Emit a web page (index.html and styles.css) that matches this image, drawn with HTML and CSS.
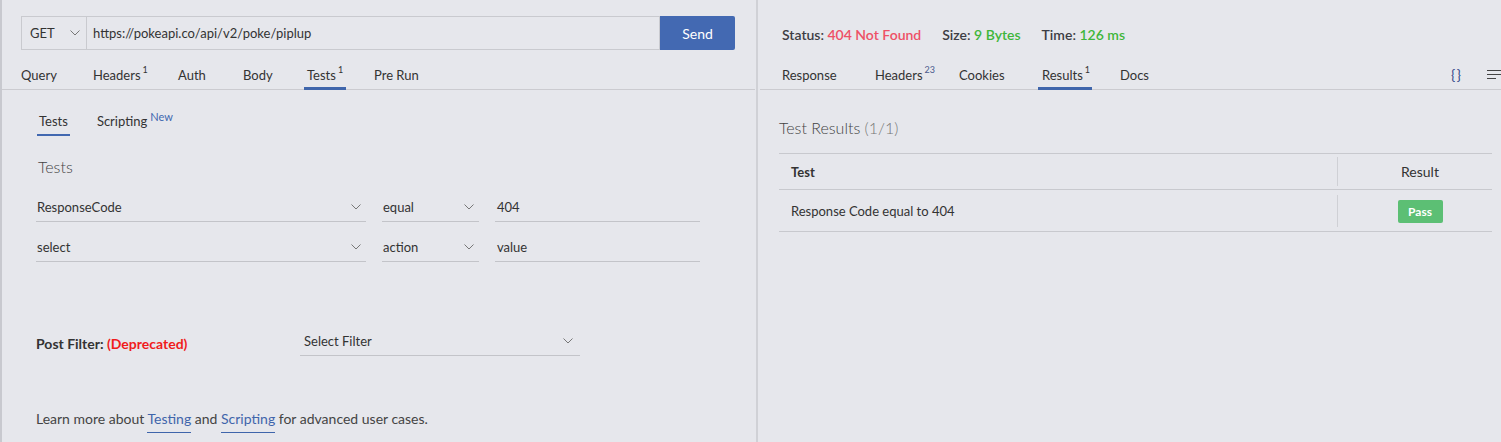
FILE: index.html
```html
<!DOCTYPE html>
<html>
<head>
<meta charset="utf-8">
<link rel="stylesheet" href="styles.css">
</head>
<body>
<div class="app">
  <section class="left">
    <div class="urlbar">
      <div class="method">GET <svg class="chev" width="10" height="6" viewBox="0 0 10 6"><path d="M0.5 0.5l4.5 4.5 4.5-4.5" fill="none" stroke="#777" stroke-width="1"/></svg></div>
      <div class="url">https://pokeapi.co/api/v2/poke/piplup</div>
      <button class="send">Send</button>
    </div>
    <nav class="tabs ltabs">
      <span class="tab"><span class="lbl">Query</span></span>
      <span class="tab"><span class="lbl">Headers<sup>1</sup></span></span>
      <span class="tab"><span class="lbl">Auth</span></span>
      <span class="tab"><span class="lbl">Body</span></span>
      <span class="tab"><span class="lbl active">Tests<sup>1</sup></span></span>
      <span class="tab"><span class="lbl">Pre Run</span></span>
    </nav>
    <div class="body">
      <div class="subtabs">
        <span class="subtab active">Tests</span>
        <span class="subtab">Scripting<sup class="new">New</sup></span>
      </div>
      <h3 class="heading">Tests</h3>
      <div class="row">
        <div class="field f1">ResponseCode<svg class="chev" width="10" height="6" viewBox="0 0 10 6"><path d="M0.5 0.5l4.5 4.5 4.5-4.5" fill="none" stroke="#777" stroke-width="1"/></svg></div>
        <div class="field f2">equal<svg class="chev" width="10" height="6" viewBox="0 0 10 6"><path d="M0.5 0.5l4.5 4.5 4.5-4.5" fill="none" stroke="#777" stroke-width="1"/></svg></div>
        <div class="field f3">404</div>
      </div>
      <div class="row">
        <div class="field f1">select<svg class="chev" width="10" height="6" viewBox="0 0 10 6"><path d="M0.5 0.5l4.5 4.5 4.5-4.5" fill="none" stroke="#777" stroke-width="1"/></svg></div>
        <div class="field f2">action<svg class="chev" width="10" height="6" viewBox="0 0 10 6"><path d="M0.5 0.5l4.5 4.5 4.5-4.5" fill="none" stroke="#777" stroke-width="1"/></svg></div>
        <div class="field f3">value</div>
      </div>
      <div class="postfilter">
        <span class="pf-label">Post Filter: <span class="dep">(Deprecated)</span></span>
        <div class="field f4">Select Filter<svg class="chev" width="10" height="6" viewBox="0 0 10 6"><path d="M0.5 0.5l4.5 4.5 4.5-4.5" fill="none" stroke="#777" stroke-width="1"/></svg></div>
      </div>
      <p class="learn">Learn more about <a>Testing</a> and <a>Scripting</a> for advanced user cases.</p>
    </div>
  </section>
  <div class="divider"></div>
  <section class="right">
    <div class="status">
      <span>Status: <b class="red">404 Not Found</b></span>
      <span>Size: <b class="green">9 Bytes</b></span>
      <span>Time: <b class="green">126 ms</b></span>
    </div>
    <nav class="tabs rtabs">
      <span class="tab"><span class="lbl">Response</span></span>
      <span class="tab"><span class="lbl">Headers<sup class="blue">23</sup></span></span>
      <span class="tab"><span class="lbl">Cookies</span></span>
      <span class="tab"><span class="lbl active">Results<sup>1</sup></span></span>
      <span class="tab"><span class="lbl">Docs</span></span>
      <span class="spacer"></span>
      <span class="braces">{ }</span>
      <svg class="menu" width="16" height="12" viewBox="0 0 16 12"><path d="M2 1.5h14M2 5.5h14M2 9.5h9" stroke="#444" stroke-width="1.1"/></svg>
    </nav>
    <div class="results">
      <h3 class="heading">Test Results <span class="count">(1/1)</span></h3>
      <div class="table">
        <div class="trow thead">
          <div class="c1">Test</div>
          <div class="c2">Result</div>
        </div>
        <div class="trow">
          <div class="c1">Response Code equal to 404</div>
          <div class="c2"><span class="pass">Pass</span></div>
        </div>
      </div>
    </div>
  </section>
</div>
</body>
</html>
```

FILE: styles.css
```css
* { box-sizing: border-box; }
html, body { margin: 0; padding: 0; }
body {
  background: #e6e7ec;
  font-family: "Lato", "Open Sans", sans-serif;
  font-size: 13px;
  color: #333;
  width: 1501px;
  height: 442px;
  overflow: hidden;
}
.app { display: flex; height: 442px; }
.left {
  width: 756px;
  border-left: 2px solid #c8c9cf;
  padding-top: 16px;
  display: flex;
  flex-direction: column;
}
.divider { width: 2px; background: #d0d1d6; }
.right { flex: 1; padding-top: 16px; padding-left: 2px; }

.urlbar { display: flex; margin-left: 19px; height: 34px; width: 714px; }
.method {
  width: 65px; border: 1px solid #c9cacf; border-right: none;
  display: flex; align-items: center; padding-left: 8px; gap: 14px;
}
.method .chev { margin-left: 1px; }
.url {
  flex: 1; border: 1px solid #c9cacf; display: flex; align-items: center; padding-left: 6px;
}
.send {
  width: 75px; background: #4369b2; color: #fff; border: none; border-radius: 0 2px 2px 0;
  font: inherit; font-size: 14px;
}

.tabs {
  display: flex; height: 24px; margin-top: 16px; align-items: flex-start;
  border-bottom: 1px solid #cbcbd0;
}
.ltabs { padding-left: 16px; margin-right: 1px; }
.rtabs { padding-left: 19px; }
.tab { flex: none; height: 23px; display: flex; }
.lbl { position: relative; height: 23px; line-height: 18px; padding: 0 3px; white-space: nowrap; }
.ltabs .tab:nth-child(1) { width: 72px; }
.ltabs .tab:nth-child(2) { width: 85px; }
.ltabs .tab:nth-child(3) { width: 65px; }
.ltabs .tab:nth-child(4) { width: 64px; }
.ltabs .tab:nth-child(5) { width: 67px; }
.rtabs .tab:nth-child(1) { width: 93px; }
.rtabs .tab:nth-child(2) { width: 84px; }
.rtabs .tab:nth-child(3) { width: 82px; }
.rtabs .tab:nth-child(4) { width: 79px; }
.rtabs .tab:nth-child(4) .lbl { padding: 0 2px 0 4px; }
.lbl sup { font-size: 9px; position: relative; top: -2px; margin-left: 2px; vertical-align: top; line-height: 12px; }
.lbl sup.blue { color: #4a5a8c; }
.lbl.active::after {
  content: ""; position: absolute; left: 0; right: 0; bottom: -1px; height: 3px; background: #3f65ab;
}

.body { padding-left: 34px; }
.subtabs { display: flex; margin-top: 22px; }
.subtab { position: relative; height: 24px; padding: 0 2px; margin-right: 25px; line-height: 18px; }
.subtab:first-child { margin-left: 1px; }
.subtab.active::after { content: ""; position: absolute; left: 0; right: 0; bottom: 0; height: 2px; background: #4168b0; }
.new { color: #4168b0; font-size: 11px; vertical-align: top; position: relative; top: -4px; margin-left: 3px; }
.heading { font-weight: 300; font-size: 16px; margin: 0; color: #444; }
.body .heading { margin-top: 21px; padding-left: 2px; }

.row { display: flex; gap: 16px; margin-top: 15px; }
.body .heading + .row { margin-top: 21px; }
.field {
  height: 25px; border-bottom: 1px solid #c3c4c9; display: flex; align-items: center;
  justify-content: space-between; padding: 0 5px 5px 1px;
}
.f1 { width: 330px; }
.f2 { width: 97px; }
.f3 { width: 205px; padding-left: 2px; }
.f4 { width: 280px; padding-left: 4px; padding-right: 7px; }
.chev { flex: none; }

.postfilter { display: flex; align-items: center; margin-top: 69px; }
.pf-label { width: 264px; font-weight: 700; font-size: 14px; color: #333; }
.dep { color: #f01c1c; font-weight: 700; }

.learn { margin: 54px 0 0 0; color: #444; font-size: 14px; }
.learn a { color: #3f65ab; border-bottom: 1px solid #3f65ab; padding-bottom: 5px; }

.status { display: flex; gap: 21px; margin-left: 22px; height: 36px; align-items: center; font-weight: 600; font-size: 14px; color: #3d3d44; }
.status b { font-weight: 600; }
.red { color: #ee5066; }
.green { color: #3fb63a; }
.rtabs { margin-top: 14px; }
.spacer { flex: 1; }
.braces { font-size: 14px; line-height: 18px; margin-right: 24px; color: #34498a; word-spacing: -2px; }
.menu { margin-top: 3px; }

.results { padding: 0 9px 0 19px; }
.results .heading { margin-top: 28px; }
.count { color: #777; }
.table { margin-top: 16px; border-top: 1px solid #c8c9ce; }
.trow { display: flex; border-bottom: 1px solid #c8c9ce; }
.trow .c1 { flex: 1; padding-left: 12px; display: flex; align-items: center; }
.trow .c2 { width: 155px; display: flex; align-items: center; justify-content: center; border-left: 1px solid #cfd0d5; margin: 3px 0; padding-left: 10px; }
.thead { height: 36px; }
.thead .c1 { font-weight: 700; color: #333; }
.thead .c2 { font-weight: 400; font-size: 14px; }
.trow:not(.thead) { height: 42px; }
.trow:not(.thead) .c2 { margin: 5px 0 4px; }
.pass {
  background: #5cbf74; color: #fff; font-weight: 700; font-size: 12px;
  width: 45px; text-align: center; border-radius: 2px; line-height: 23px;
}
```
